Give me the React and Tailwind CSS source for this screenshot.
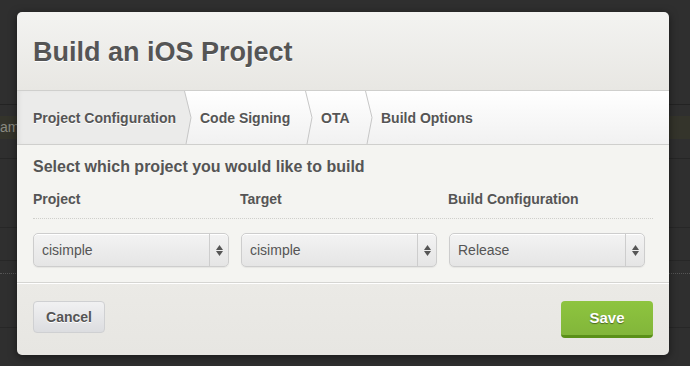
import React from "react";

const tabs = [
  { label: "Project Configuration", width: "w-[167px]", pad: "pl-4" },
  { label: "Code Signing", width: "w-[113px]", pad: "pl-2" },
  { label: "OTA", width: "w-[52px]", pad: "pl-2" },
  { label: "Build Options", width: "flex-1", pad: "pl-2" },
];

function Chevron({ filled }) {
  return (
    <svg width="8" height="53" viewBox="0 0 8 53" className="shrink-0 block">
      {filled && <polygon points="0,0 0.5,0 7,26.5 2,53 0,53" fill="#ebebea" />}
      <polyline points="0.5,0 7,26.5 2,53" fill="none" stroke="#c6c6c6" strokeWidth="1" />
    </svg>
  );
}

function SelectBox({ value }) {
  return (
    <div className="w-[196px] h-[34px] flex rounded-[5px] border border-[#cdcdcd] bg-gradient-to-b from-[#f3f3f3] to-[#e5e5e5] shadow-[inset_0_1px_0_#fff,0_1px_1px_rgba(0,0,0,0.06)]">
      <div className="flex-1 flex items-center pl-2 text-[14px] text-[#555]">{value}</div>
      <div className="w-[19px] border-l border-[#cdcdcd] flex flex-col items-center justify-center gap-[1px]">
        <svg width="7" height="5" viewBox="0 0 7 5"><polygon points="3.5,0 7,5 0,5" fill="#555" /></svg>
        <svg width="7" height="5" viewBox="0 0 7 5"><polygon points="0,0 7,0 3.5,5" fill="#555" /></svg>
      </div>
    </div>
  );
}

export default function App() {
  return (
    <div
      className="relative w-[690px] h-[366px] overflow-hidden bg-[#2f2f2f]"
      style={{ fontFamily: '"Liberation Sans", Arial, sans-serif' }}
    >
      {/* page behind the dialog */}
      <div className="flex flex-col">
        <div className="h-[105px] border-b border-[#232323]" />
        <div className="h-[11px]" />
        <div className="h-[23px] bg-[#34342b] flex items-center text-[#8a8a80] text-[14px]">
          <span>am</span>
        </div>
        <div className="h-[20px] border-b border-[#262626]" />
        <div className="h-[69px] border-b border-[#272727]" />
        <div className="h-[33px] border-b border-[#272727]" />
        <div className="h-[13px] border-b border-dotted border-[#555]" />
        <div className="h-[54px] border-b border-[#272727]" />
      </div>

      {/* dialog */}
      <div className="absolute left-[17px] top-[12px] w-[652px] h-[343px] rounded-[5px] overflow-hidden flex flex-col shadow-[0_2px_8px_rgba(0,0,0,0.5)]">
        <div className="h-[79px] shrink-0 bg-gradient-to-b from-[#f3f3f1] to-[#e8e7e3] border-b border-[#cfcfcd] flex items-center px-4 pt-[2px]">
          <h1 className="text-[27px] font-bold text-[#555] [text-shadow:0_1px_0_#fff]">
            Build an iOS Project
          </h1>
        </div>

        <div className="h-[54px] shrink-0 flex bg-gradient-to-b from-[#ffffff] to-[#f1f1f1] border-b border-[#cfcfcd]">
          {tabs.map((t, i) => (
            <React.Fragment key={t.label}>
              <div
                className={`${t.width} ${t.pad} flex items-center pt-[2px] text-[14px] font-bold text-[#555] [text-shadow:0_1px_0_#fff] ${
                  i === 0 ? "bg-[#ebebea] shadow-[inset_4px_0_6px_-4px_rgba(0,0,0,0.12)]" : ""
                }`}
              >
                {t.label}
              </div>
              {i < tabs.length - 1 && <Chevron filled={i === 0} />}
            </React.Fragment>
          ))}
        </div>

        <div className="h-[137px] shrink-0 bg-[#f4f4f1] px-4 pt-[13px]">
          <h2 className="text-[16px] font-bold text-[#555] leading-[18px]">
            Select which project you would like to build
          </h2>
          <div className="mt-[13px] grid grid-cols-[207px_208px_206px] text-[14px] font-bold text-[#555] pb-[8px] border-b border-dotted border-[#cfcfcb]">
            <span>Project</span>
            <span>Target</span>
            <span>Build Configuration</span>
          </div>
          <div className="mt-[14px] flex gap-[12px]">
            <SelectBox value="cisimple" />
            <SelectBox value="cisimple" />
            <SelectBox value="Release" />
          </div>
        </div>

        <div className="flex-1 bg-gradient-to-b from-[#ebeae6] to-[#e7e6e2] border-t border-[#d5d5d2] shadow-[inset_0_1px_0_#fff] flex items-start justify-between px-4 pt-[18px]">
          <button className="w-[72px] h-[32px] rounded-[4px] border border-[#cfd0d2] bg-gradient-to-b from-[#f1f1f2] to-[#dcdde0] text-[14px] font-bold text-[#555] [text-shadow:0_1px_0_#fff]">
            Cancel
          </button>
          <button className="w-[92px] h-[37px] rounded-[4px] bg-gradient-to-b from-[#8ec43f] to-[#82b63a] border-b-[3px] border-[#5a9018] text-[15px] font-bold text-white [text-shadow:0_1px_1px_rgba(0,0,0,0.45)]">
            Save
          </button>
        </div>
      </div>
    </div>
  );
}
